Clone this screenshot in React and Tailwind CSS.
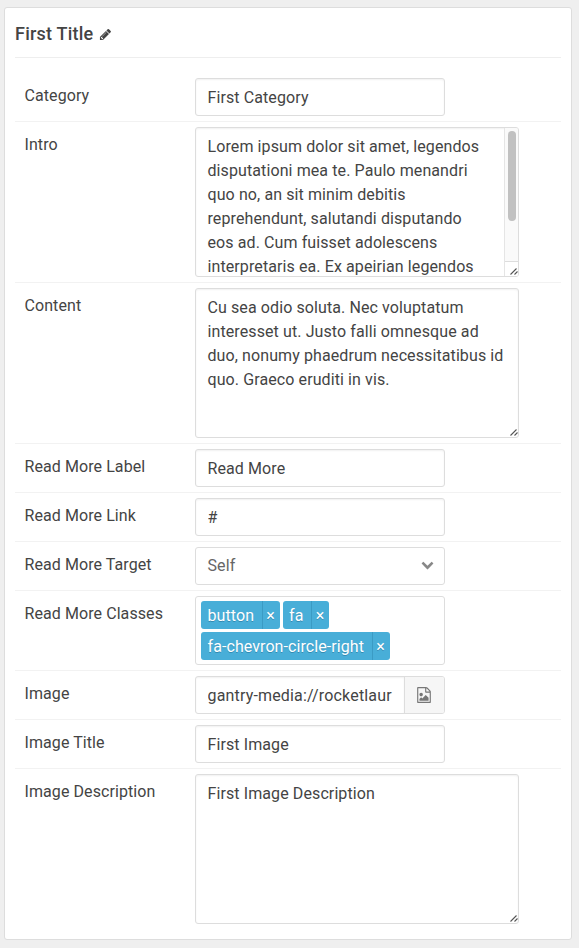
import React from "react";

const PENCIL =
  "M491 1536l91-91-235-235-91 91v107h128v128h107zm523-928q0-22-22-22-10 0-17 7l-542 542q-7 7-7 17 0 22 22 22 10 0 17-7l542-542q7-7 7-17zm-54-192l416 416-832 832h-416v-416zm683 96q0 53-37 90l-166 166-416-416 166-165q36-38 90-38 53 0 91 38l235 234q37 39 37 91z";
const CHEVRON =
  "M1683 808l-742 741q-19 19-45 19t-45-19l-742-741q-19-19-19-45.5t19-45.5l166-165q19-19 45-19t45 19l531 531 531-531q19-19 45-19t45 19l166 165q19 19 19 45.5t-19 45.5z";
const FILE_IMAGE =
  "M1596 380q28 28 48 76t20 88v1152q0 40-28 68t-68 28h-1344q-40 0-68-28t-28-68v-1600q0-40 28-68t68-28h896q40 0 88 20t76 48zm-444-244v376h376q-10-29-22-41l-313-313q-12-12-41-22zm384 1528v-1024h-416q-40 0-68-28t-28-68v-416h-768v1536h1280zm-128-448v320h-1024v-192l192-192 128 128 384-384zm-832-192q-80 0-136-56t-56-136 56-136 136-56 136 56 56 136-56 136-136 56z";

function Glyph({ d, className }) {
  return (
    <svg viewBox="0 0 1792 1792" className={className} fill="currentColor" aria-hidden="true">
      <path d={d} />
    </svg>
  );
}

function Row({ label, last, children }) {
  return (
    <div className={"flex py-[5px] pl-[9.5px] " + (last ? "" : "border-b border-[#f2f2f2]")}>
      <div className="w-[170.5px] shrink-0 pt-1.5 leading-6 tracking-[0.08px]">{label}</div>
      {children}
    </div>
  );
}

const box = "rounded-[3px] border border-[#dddddd] bg-white ";

function TextInput({ value }) {
  return (
    <input
      readOnly
      value={value}
      className={box + "h-[38px] w-[250px] px-[11.5px] tracking-[0.1px] shadow-[inset_0_1px_2px_rgba(0,0,0,0.06)] outline-none"}
    />
  );
}

function Grip() {
  return (
    <svg viewBox="0 0 8 8" className="absolute right-0 bottom-px size-2" stroke="#555" strokeWidth="1.1" aria-hidden="true">
      <path d="M0.5 7.5L6.5 1.5M4.5 7.5L7.5 4.5" />
    </svg>
  );
}

function TextArea({ lines, scroll }) {
  return (
    <div className={box + "relative flex h-[150px] w-[324px] overflow-hidden shadow-[inset_0_1px_2px_rgba(0,0,0,0.06)]"}>
      <div className="min-w-0 flex-1 pt-[7px] pl-[11.5px] leading-6 tracking-[0.1px] whitespace-pre">
        {lines.map((line) => (
          <div key={line}>{line}</div>
        ))}
      </div>
      {scroll && (
        <div className="flex w-[14px] flex-col border-l border-[#e5e5e5] bg-[#fafafa]">
          <div className="mt-[3px] ml-[3px] h-[90px] w-2 rounded-full bg-[#c1c1c1]" />
          <div className="mt-auto h-[15px] border-t border-[#dddddd] bg-white" />
        </div>
      )}
      <Grip />
    </div>
  );
}

function Tag({ children }) {
  return (
    <span className="flex h-7 rounded-[3px] bg-[#48aed8] tracking-[0.08px] text-white">
      <span className="pr-[7.5px] pl-[6.5px] leading-[29px] [text-shadow:0_1px_0_rgba(0,51,83,0.3)]">{children}</span>
      <span className="w-[18px] border-l border-[#3b9bc4] pr-px text-center leading-[29px] [text-shadow:0_1px_0_rgba(0,51,83,0.3)]">
        ×
      </span>
    </span>
  );
}

export default function App() {
  return (
    <div className="h-[948px] w-[579px] overflow-hidden bg-[#efefef] pt-[7px] pl-1 font-['Roboto',sans-serif] text-base text-[#444444]">
      <div className="h-[933px] w-[568px] rounded-[3px] border border-[#dddddd] bg-white px-2.5">
        <h4 className="flex h-[50px] items-center border-b border-[#eeeeee] text-[18px] font-medium">
          <span className="pt-0.5 tracking-[0.22px]">First Title</span>
          <Glyph d={PENCIL} className="mt-[3px] ml-1.5 size-[13px]" />
        </h4>
        <div className="pt-[15px]">
          <Row label="Category">
            <TextInput value="First Category" />
          </Row>
          <Row label="Intro">
            <TextArea
              scroll
              lines={[
                "Lorem ipsum dolor sit amet, legendos",
                "disputationi mea te. Paulo menandri",
                "quo no, an sit minim debitis",
                "reprehendunt, salutandi disputando",
                "eos ad. Cum fuisset adolescens",
                "interpretaris ea. Ex apeirian legendos",
              ]}
            />
          </Row>
          <Row label="Content">
            <TextArea
              lines={[
                "Cu sea odio soluta. Nec voluptatum",
                "interesset ut. Justo falli omnesque ad",
                "duo, nonumy phaedrum necessitatibus id",
                "quo. Graeco eruditi in vis.",
              ]}
            />
          </Row>
          <Row label="Read More Label">
            <TextInput value="Read More" />
          </Row>
          <Row label="Read More Link">
            <TextInput value="#" />
          </Row>
          <Row label="Read More Target">
            <div className={box + "flex h-[38px] w-[250px] items-center justify-between pr-[10.5px] pl-[11.5px] text-[#666666]"}>
              <span className="tracking-[0.1px]">Self</span>
              <Glyph d={CHEVRON} className="mb-[3px] size-[13px] text-[#888888]" />
            </div>
          </Row>
          <Row label="Read More Classes">
            <div className={box + "flex h-[69px] w-[250px] flex-wrap content-start gap-[3px] pt-1 pl-[5px]"}>
              <Tag>button</Tag>
              <Tag>fa</Tag>
              <Tag>fa-chevron-circle-right</Tag>
            </div>
          </Row>
          <Row label="Image">
            <div className={box + "flex h-[38px] w-[250px] overflow-hidden"}>
              <div className="w-[208px] px-[11.5px] leading-[37px] tracking-[0.17px] shadow-[inset_0_1px_2px_rgba(0,0,0,0.06)]">
                <div className="overflow-hidden whitespace-nowrap">gantry-media://rocketlaur</div>
              </div>
              <div className="flex flex-1 items-center justify-center border-l border-[#dddddd] bg-[#f6f6f6] pr-[2px] text-[#777777]">
                <Glyph d={FILE_IMAGE} className="size-4" />
              </div>
            </div>
          </Row>
          <Row label="Image Title">
            <TextInput value="First Image" />
          </Row>
          <Row label="Image Description" last>
            <TextArea lines={["First Image Description"]} />
          </Row>
        </div>
      </div>
    </div>
  );
}
